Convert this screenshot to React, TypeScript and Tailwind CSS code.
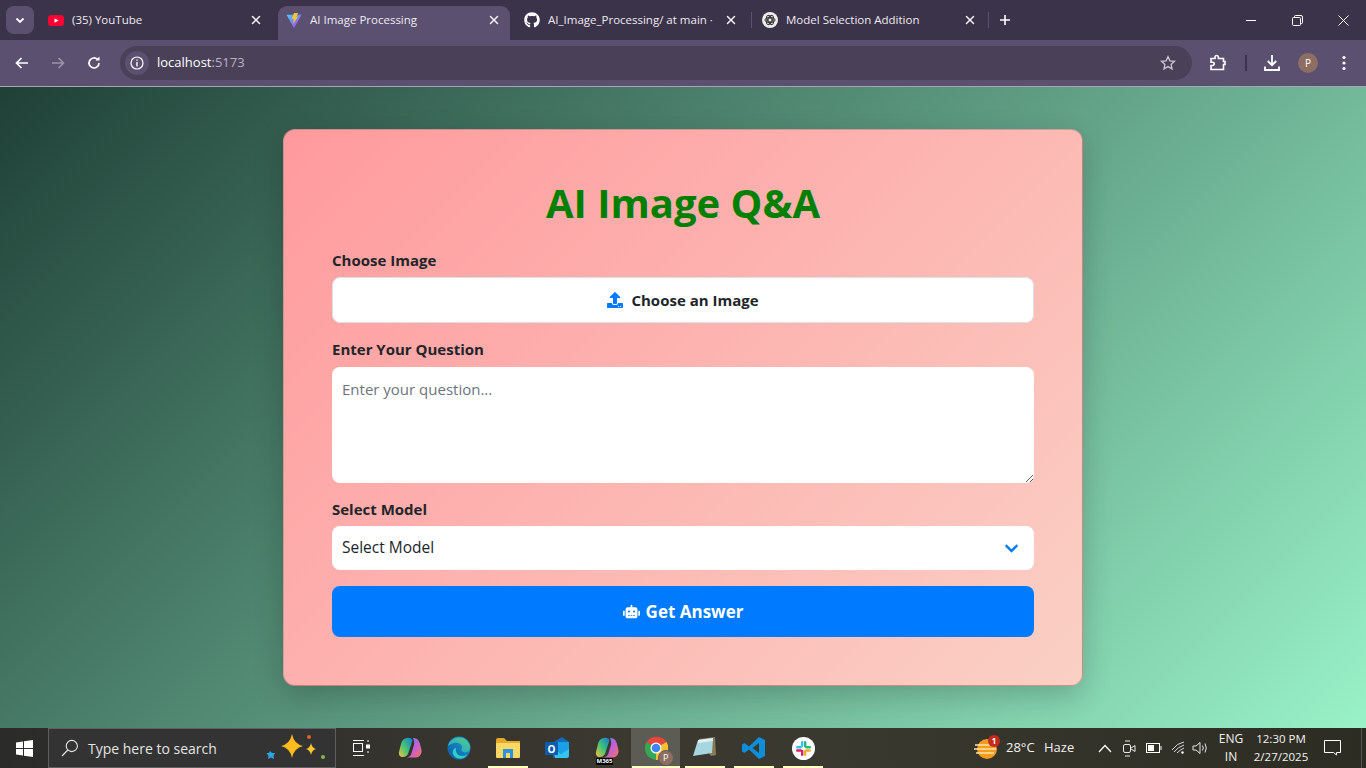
import { FaChevronDown, FaGithub, FaRobot, FaUpload } from 'react-icons/fa';
import { IoClose } from 'react-icons/io5';

const uiFont = "[font-family:'Open_Sans',sans-serif]";

const ViteIcon = () => (
  <svg width="17" height="17" viewBox="0 0 17 17" aria-hidden="true">
    <defs>
      <linearGradient id="viteA" x1="0" y1="0" x2="1" y2="1">
        <stop offset="0" stopColor="#41d1ff" />
        <stop offset="1" stopColor="#bd34fe" />
      </linearGradient>
    </defs>
    <path d="M0.5 2.5 L16.5 2.5 L8.5 16.5 Z" fill="url(#viteA)" />
    <path d="M8.5 0.5 L13 0.5 L10.8 4.5 L12.8 4.5 L7.5 12 L8.4 6.8 L6.2 6.8 Z" fill="#ffc629" />
  </svg>
);

const YoutubeIcon = () => (
  <svg width="16" height="11" viewBox="0 0 16 11" aria-hidden="true">
    <rect width="16" height="11" rx="3" fill="#ff0033" />
    <path d="M6.5 3.2 L10.5 5.5 L6.5 7.8 Z" fill="#fff" />
  </svg>
);

const OpenAiIcon = () => (
  <svg width="16" height="16" viewBox="0 0 16 16" aria-hidden="true">
    <circle cx="8" cy="8" r="8" fill="#eeeeee" />
    <g fill="none" stroke="#3a3a3a" strokeWidth="1">
      <circle cx="8" cy="8" r="2" />
      <ellipse cx="8" cy="8" rx="5" ry="2.6" />
      <ellipse cx="8" cy="8" rx="5" ry="2.6" transform="rotate(60 8 8)" />
      <ellipse cx="8" cy="8" rx="5" ry="2.6" transform="rotate(120 8 8)" />
    </g>
  </svg>
);

const Tab = ({
  icon,
  title,
  box,
  active,
}: {
  icon: React.ReactNode;
  title: string;
  box: string;
  active?: boolean;
}) => (
  <div className={`flex h-[34px] shrink-0 items-center pb-[6px] ${box} ${active ? 'rounded-t-[9px] bg-[#5b5070]' : ''}`}>
    <span className="flex w-[16px] shrink-0 items-center justify-center">{icon}</span>
    <span className="ml-[8px] min-w-0 flex-1 overflow-hidden whitespace-nowrap text-[11.5px] text-[#eeeaf2]">{title}</span>
    <IoClose className="ml-[4px] shrink-0 text-[#f2f0f5]" size={16} />
  </div>
);

const ChromeBar = () => (
  <div className={`${uiFont} shrink-0`}>
    <div className="flex h-[40px] items-end bg-[#3b3349] pl-[6px]">
      <div className="mb-[6px] flex h-[28px] w-[28px] shrink-0 items-center justify-center rounded-[8px] bg-[#5b5070]">
        <svg width="12" height="12" viewBox="0 0 12 12" fill="none" stroke="#fff" strokeWidth="1.8">
          <path d="M2.5 4.5 L6 8 L9.5 4.5" />
        </svg>
      </div>
      <div className="ml-[6px] flex items-end">
        <Tab icon={<YoutubeIcon />} title="(35) YouTube" box="w-[238px] pl-[8px] pr-[14px]" />
        <Tab icon={<ViteIcon />} title="AI Image Processing" box="w-[232px] pl-[8px] pr-[8px]" active />
        <Tab
          icon={<FaGithub size={16} className="text-white" />}
          title="AI_Image_Processing/ at main ·"
          box="w-[241px] pl-[14px] pr-[12px]"
        />
        <div className="mb-[12px] h-[16px] w-px bg-[#5b5070]" />
        <Tab icon={<OpenAiIcon />} title="Model Selection Addition" box="w-[236px] pl-[10px] pr-[10px]" />
        <div className="mb-[12px] h-[16px] w-px bg-[#5b5070]" />
        <svg className="mb-[14px] ml-[10px]" width="12" height="12" viewBox="0 0 12 12" stroke="#fff" strokeWidth="1.6">
          <path d="M6 1 V11 M1 6 H11" />
        </svg>
      </div>
      <div className="ml-auto flex h-[40px] items-center text-white">
        <div className="flex w-[46px] justify-center">
          <div className="h-px w-[10px] bg-white" />
        </div>
        <div className="flex w-[46px] justify-center">
          <svg width="11" height="11" viewBox="0 0 11 11" fill="none" stroke="#fff">
            <rect x="0.5" y="2.5" width="8" height="8" rx="1" />
            <path d="M2.5 2 V1.5 Q2.5 0.5 3.5 0.5 H9 Q10.5 0.5 10.5 2 V7.5 Q10.5 8.5 9.5 8.5 H9" />
          </svg>
        </div>
        <div className="flex w-[46px] justify-center">
          <svg width="11" height="11" viewBox="0 0 11 11" stroke="#fff">
            <path d="M0.5 0.5 L10.5 10.5 M10.5 0.5 L0.5 10.5" />
          </svg>
        </div>
      </div>
    </div>
    <div className="flex h-[47px] items-center border-b border-[#a9a3b3] bg-[#5b5070] pl-[14px] pr-[20px]">
      <svg width="16" height="16" viewBox="0 0 16 16" fill="none" stroke="#fff" strokeWidth="1.7">
        <path d="M14 8 H2.5 M7.5 3 L2.5 8 L7.5 13" />
      </svg>
      <svg className="ml-[20px]" width="16" height="16" viewBox="0 0 16 16" fill="none" stroke="#9b93a8" strokeWidth="1.7">
        <path d="M2 8 H13.5 M8.5 3 L13.5 8 L8.5 13" />
      </svg>
      <svg className="ml-[20px]" width="16" height="16" viewBox="0 0 16 16" fill="none" stroke="#fff" strokeWidth="1.7">
        <path d="M13 8 A5 5 0 1 1 11.5 4.4" />
        <path d="M13.5 1.5 V5.5 H9.5 Z" fill="#fff" stroke="none" />
      </svg>
      <div className="ml-[18px] flex h-[34px] flex-1 items-center rounded-full bg-[#4a4159] pl-[5px] pr-[16px]">
        <div className="flex h-[24px] w-[24px] items-center justify-center rounded-full bg-[#5b5070]">
          <svg width="14" height="14" viewBox="0 0 14 14" fill="none" stroke="#fff" strokeWidth="1.2">
            <circle cx="7" cy="7" r="6" />
            <path d="M7 6 V10.5 M7 3.4 V4.8" strokeWidth="1.4" />
          </svg>
        </div>
        <span className="ml-[8px] text-[13px] text-white">
          localhost<span className="text-[#b9b3c4]">:5173</span>
        </span>
        <svg className="ml-auto" width="16" height="16" viewBox="0 0 16 16" fill="none" stroke="#c9c5d0" strokeWidth="1.3">
          <path d="M8 1.6 L9.9 5.8 L14.5 6.3 L11.1 9.4 L12 13.9 L8 11.6 L4 13.9 L4.9 9.4 L1.5 6.3 L6.1 5.8 Z" />
        </svg>
      </div>
      <svg className="ml-[17px]" width="18" height="18" viewBox="0 0 18 18" fill="none" stroke="#fff" strokeWidth="1.6">
        <path d="M2 4.5 H6 V3.2 A1.7 1.7 0 0 1 9.4 3.2 V4.5 H14.5 V7.5 H16 V10.5 H14.5 V15.5 H2 V11.5 H4 A1.7 1.7 0 0 0 4 8.2 H2 Z" />
      </svg>
      <div className="ml-[18px] h-[16px] w-[2px] bg-[#3b3349]" />
      <svg className="ml-[16px]" width="18" height="18" viewBox="0 0 18 18" fill="none" stroke="#fff" strokeWidth="1.8">
        <path d="M9 1 V11 M4.8 7 L9 11.2 L13.2 7 M2 12.5 V16 H16 V12.5" />
      </svg>
      <div className="ml-[17px] flex h-[20px] w-[20px] items-center justify-center rounded-full bg-[#8d6e63] text-[10px] text-white">
        P
      </div>
      <svg className="ml-[24px]" width="4" height="16" viewBox="0 0 4 16" fill="#fff">
        <circle cx="2" cy="2.5" r="1.6" />
        <circle cx="2" cy="8" r="1.6" />
        <circle cx="2" cy="13.5" r="1.6" />
      </svg>
    </div>
  </div>
);

const QaForm = () => (
  <div className="w-[800px] rounded-[12px] border border-[rgba(120,70,70,0.35)] bg-[linear-gradient(135deg,#ff9a9e_0%,#fad0c4_100%)] px-[48px] pb-[48px] pt-[46px] shadow-[0_10px_30px_rgba(0,0,0,0.2)] [font-family:'Open_Sans',sans-serif]">
    <h1 className="mb-[18px] text-center text-[40px] font-bold leading-[54px] text-[#008000]">AI Image Q&amp;A</h1>
    <label className="mb-[5px] block text-[15px] font-bold leading-[24px] text-[#212529]">Choose Image</label>
    <div className="flex h-[46px] items-center justify-center rounded-[8px] border border-[#dee2e6] bg-white text-[15px] font-bold text-[#212529]">
      <FaUpload className="mr-[8px] text-[#007bff]" size={16} />
      Choose an Image
    </div>
    <label className="mb-[6px] mt-[14px] block text-[15px] font-bold leading-[24px] text-[#212529]">
      Enter Your Question
    </label>
    <textarea
      className="block h-[116px] w-full rounded-[8px] bg-white px-[10px] py-[10px] text-[15px] leading-[24px] text-[#212529] outline-none placeholder:text-[#6c757d]"
      placeholder="Enter your question..."
    />
    <label className="mb-[5px] mt-[14px] block text-[15px] font-bold leading-[24px] text-[#212529]">Select Model</label>
    <div className="relative">
      <select className="block h-[44px] w-full appearance-none rounded-[8px] bg-white px-[10px] text-[15.5px] text-[#212529] outline-none">
        <option>Select Model</option>
      </select>
      <FaChevronDown className="absolute right-[15px] top-[15px] text-[#007bff]" size={15} />
    </div>
    <button className="mt-[16px] flex h-[51px] w-full items-center justify-center rounded-[8px] bg-[#007bff] text-[17px] font-bold text-white">
      <FaRobot className="mr-[6px]" size={17} />
      Get Answer
    </button>
  </div>
);

const Cell = ({ children, active, mark }: { children: React.ReactNode; active?: boolean; mark?: string }) => (
  <div className={`relative flex h-[40px] w-[49.2px] shrink-0 items-center justify-center ${active ? 'bg-[#5c5c55]' : ''}`}>
    {children}
    {mark && <div className={`absolute bottom-0 h-[2px] bg-[#fdfdc4] ${mark}`} />}
  </div>
);

const CopilotMark = ({ idA, idB }: { idA: string; idB: string }) => (
  <svg width="24" height="22" viewBox="0 0 24 22">
    <defs>
      <linearGradient id={idA} x1="0" y1="1" x2="1" y2="0">
        <stop offset="0" stopColor="#f5c23a" />
        <stop offset="0.5" stopColor="#3dc27b" />
        <stop offset="1" stopColor="#1a78d8" />
      </linearGradient>
      <linearGradient id={idB} x1="0" y1="0" x2="1" y2="1">
        <stop offset="0" stopColor="#3ea0ea" />
        <stop offset="0.5" stopColor="#c25ddb" />
        <stop offset="1" stopColor="#f4765a" />
      </linearGradient>
    </defs>
    <path d="M9 1 C11 0.5 13.5 1 14.5 3 L10 17 C9 19 7 20 5 20 C2 20 0.5 18 1 15 L3 7 C4 3 6 1.5 9 1 Z" fill={`url(#${idA})`} />
    <path d="M15 1 C19 1 21 3 22 7 L23.5 13 C24 17 22 20 18 20.5 H9 C12 20 13 18 13.5 16 L16 8 C16.5 5 16 3 15 1 Z" fill={`url(#${idB})`} />
  </svg>
);

const Taskbar = () => (
  <div className={`${uiFont} flex h-[40px] shrink-0 items-center bg-[linear-gradient(90deg,#2b2b2a_0%,#3a382f_45%,#3a392f_60%,#2c2c23_100%)] text-white`}>
    <div className="flex h-[40px] w-[48px] shrink-0 items-center justify-center">
      <svg width="17" height="17" viewBox="0 0 17 17" fill="#fff">
        <path d="M0 2.4 L7 1.4 V8 H0 Z M8 1.2 L17 0 V8 H8 Z M0 9 H7 V15.6 L0 14.6 Z M8 9 H17 V17 L8 15.8 Z" />
      </svg>
    </div>
    <div className="flex h-[40px] w-[288px] shrink-0 items-center border border-[#5f5f5f] bg-[#333333] pl-[12px]">
      <svg width="18" height="18" viewBox="0 0 18 18" fill="none" stroke="#e6e6e6" strokeWidth="1.1">
        <circle cx="10.8" cy="7" r="5.6" />
        <path d="M6.8 11 L1 17" />
      </svg>
      <span className="ml-[9px] text-[14px] text-[#e4e4e4]">Type here to search</span>
      <svg className="ml-auto mr-[8px]" width="62" height="32" viewBox="0 0 62 32">
        <path d="M27 2 Q29 12 38 14 Q29 16 27 26 Q25 16 16 14 Q25 12 27 2 Z" fill="#fdbb1e" />
        <path d="M46 11 Q47 16 51 17 Q47 18 46 23 Q45 18 41 17 Q45 16 46 11 Z" fill="#fdc62c" />
        <path d="M5 19 L7 21 L10 21 L8.5 24 L9 27 L6 25.5 L3 27 L3.5 24 L1.5 21 L4 21 Z" fill="#2aa7e8" />
        <circle cx="44" cy="5" r="2" fill="#e2622a" />
        <circle cx="58" cy="25" r="2" fill="#84b741" />
      </svg>
    </div>
    <Cell>
      <svg width="18" height="16" viewBox="0 0 18 16" fill="none" stroke="#fff">
        <path d="M1 0.5 H12 M1 15.5 H12" />
        <rect x="1.5" y="3.5" width="9" height="8" />
        <path d="M15 1 H17 M15 12 H17" />
        <rect x="14.5" y="5" width="3" height="3" fill="#fff" />
      </svg>
    </Cell>
    <Cell>
      <CopilotMark idA="cop1" idB="cop2" />
    </Cell>
    <Cell>
      <svg width="24" height="24" viewBox="0 0 24 24">
        <defs>
          <linearGradient id="edge1" x1="0" y1="1" x2="1" y2="0">
            <stop offset="0" stopColor="#0c59a4" />
            <stop offset="1" stopColor="#1ba0d8" />
          </linearGradient>
          <linearGradient id="edge2" x1="0" y1="1" x2="1" y2="0">
            <stop offset="0" stopColor="#1b9de2" />
            <stop offset="1" stopColor="#52d17c" />
          </linearGradient>
        </defs>
        <circle cx="12" cy="12" r="11.5" fill="url(#edge1)" />
        <path d="M1 10 C3 2 13 -1 19 4 C24 8 24 15 20 16 C16 17 13 15 15 12 C16 9 11 6 7 7 C4 8 2 9 1 10 Z" fill="url(#edge2)" />
        <path d="M9 12 C8 18 13 22 20 19 C17 24 8 24 6 18 C5 15 7 12 9 12 Z" fill="#2fd0c4" />
      </svg>
    </Cell>
    <Cell mark="w-[40px]">
      <svg width="24" height="20" viewBox="0 0 24 20">
        <path d="M0 2 Q0 0 2 0 H8 L11 3 H24 V6 H0 Z" fill="#e5a82a" />
        <rect y="5" width="24" height="15" rx="1" fill="#fbd866" />
        <rect x="7" y="11" width="10" height="9" fill="#2a93e0" />
        <rect x="10" y="15" width="4" height="5" fill="#fbd866" />
      </svg>
    </Cell>
    <Cell>
      <svg width="24" height="24" viewBox="0 0 24 24">
        <path d="M9 6 L17 1 L24 6 V19 Q24 22 21 22 H10 Q8 22 8 20 Z" fill="#0f6cbd" />
        <path d="M9 6 H24 V14 L16 18 L9 12 Z" fill="#1a9fe8" />
        <path d="M9 12 L16 18 L24 13 V20 Q24 22 21 22 H10 Z" fill="#35c3f0" />
        <rect x="0" y="6" width="13" height="13" rx="1" fill="#0a5cad" />
        <text x="6.5" y="16.5" textAnchor="middle" fontSize="10" fontWeight="700" fill="#fff">O</text>
      </svg>
    </Cell>
    <Cell>
      <div className="relative">
        <CopilotMark idA="m1" idB="m2" />
        <span className="absolute bottom-[-6px] left-[1px] bg-black px-[1px] text-[6px] font-bold leading-[7px] text-white">M365</span>
      </div>
    </Cell>
    <Cell active mark="w-[48px]">
      <div className="relative">
        <svg width="24" height="24" viewBox="0 0 24 24">
          <path d="M12 12 L2.5 6 A12 12 0 0 1 22.5 6 Z" fill="#e8453c" />
          <path d="M12 12 L22.5 6 A12 12 0 0 1 12 24 Z" fill="#fbc02d" />
          <path d="M12 12 L12 24 A12 12 0 0 1 2.5 6 Z" fill="#34a853" />
          <circle cx="12" cy="12" r="5.5" fill="#fff" />
          <circle cx="12" cy="12" r="4.3" fill="#3f86f4" />
        </svg>
        <div className="absolute bottom-[-6px] right-[-6px] flex h-[16px] w-[16px] items-center justify-center rounded-full border border-[#5c5c55] bg-[#8d6e63] text-[9px] text-white">
          P
        </div>
      </div>
    </Cell>
    <Cell mark="w-[40px]">
      <svg width="24" height="24" viewBox="0 0 24 24">
        <path d="M6 3 L22 1 L23 19 L18 20 Z" fill="#8a7a55" />
        <path d="M5 4 L20 2 L19 17 L0 20 Z" fill="#a8d6df" />
        <path d="M5 4 L20 2 L20 5 L5 7 Z" fill="#dfeff2" />
      </svg>
    </Cell>
    <Cell mark="w-[40px]">
      <svg width="24" height="24" viewBox="0 0 24 24">
        <path d="M17 1 L23 4 V20 L17 23 L7 13.5 L2.5 17 L0 15.5 V8.5 L2.5 7 L7 10.5 Z M17 7 L10.5 12 L17 17 Z" fill="#0e8ddb" fillRule="evenodd" />
      </svg>
    </Cell>
    <Cell mark="w-[40px]">
      <div className="flex h-[23px] w-[23px] items-center justify-center rounded-full bg-white">
        <svg width="15" height="15" viewBox="0 0 15 15">
          <rect x="5" y="0" width="2.4" height="6" rx="1.2" fill="#36c5f0" />
          <rect x="0" y="5" width="6" height="2.4" rx="1.2" fill="#36c5f0" />
          <rect x="8" y="0" width="2.4" height="6.5" rx="1.2" fill="#2eb67d" />
          <rect x="9" y="5" width="6" height="2.4" rx="1.2" fill="#2eb67d" />
          <rect x="8" y="9" width="2.4" height="6" rx="1.2" fill="#ecb22e" />
          <rect x="9" y="8.3" width="6" height="2.4" rx="1.2" fill="#ecb22e" />
          <rect x="5" y="9" width="2.4" height="6" rx="1.2" fill="#e01e5a" />
          <rect x="0" y="8.3" width="6" height="2.4" rx="1.2" fill="#e01e5a" />
        </svg>
      </div>
    </Cell>

    <div className="ml-auto flex h-[40px] items-center">
      <div className="relative mr-[8px] h-[24px] w-[24px]">
        <svg width="24" height="24" viewBox="0 0 24 24">
          <circle cx="13" cy="13" r="10" fill="#f39a1f" />
          <path d="M1 9 H20 M0 13 H22 M2 17 H20" stroke="#fde3a8" strokeWidth="1.6" />
        </svg>
        <div className="absolute right-[-2px] top-[-1px] flex h-[12px] w-[12px] items-center justify-center rounded-full bg-[#c42b1c] text-[8px] font-bold leading-none text-white">
          1
        </div>
      </div>
      <span className="w-[38px] text-[13px] text-[#f2f2f2]">28°C</span>
      <span className="w-[54px] text-[13px] text-[#f2f2f2]">Haze</span>
      <svg className="mr-[10px]" width="14" height="9" viewBox="0 0 14 9" fill="none" stroke="#fff" strokeWidth="1.2">
        <path d="M1 8 L7 1.5 L13 8" />
      </svg>
      <svg className="mr-[10px]" width="14" height="17" viewBox="0 0 14 17" fill="none" stroke="#e8e8e8">
        <path d="M3 1 H8 M3 16 H8" />
        <rect x="1.5" y="4.5" width="7" height="8" rx="1.5" />
        <path d="M9 8 L13 5.5 V11.5 L9 9" />
      </svg>
      <svg className="mr-[9px]" width="16" height="10" viewBox="0 0 16 10" fill="none" stroke="#fff">
        <rect x="0.5" y="0.5" width="13" height="9" />
        <rect x="2" y="2" width="6" height="6" fill="#fff" stroke="none" />
        <path d="M15 3 V7" />
      </svg>
      <svg className="mr-[7px]" width="14" height="14" viewBox="0 0 14 14" fill="none" stroke="#d8d8d8">
        <path d="M1 9 Q6 2 13 1 M3 11 Q7 6 13 4 M6 12 Q9 9 13 7" />
        <circle cx="11.5" cy="11.5" r="1.2" fill="#fff" stroke="none" />
      </svg>
      <svg className="mr-[4px]" width="17" height="14" viewBox="0 0 17 14" fill="none" stroke="#e8e8e8">
        <path d="M1 5 H4 L8 1.5 V12.5 L4 9 H1 Z M10.5 4.5 Q12 7 10.5 9.5 M13 2.5 Q15.5 7 13 11.5" />
      </svg>
      <div className="w-[36px] text-center text-[12px] leading-[18px] text-[#f2f2f2]">
        <div>ENG</div>
        <div>IN</div>
      </div>
      <div className="w-[64px] text-center text-[11.5px] leading-[18px] text-[#f2f2f2]">
        <div>12:30 PM</div>
        <div>2/27/2025</div>
      </div>
      <svg className="ml-[11px]" width="17" height="16" viewBox="0 0 17 16" fill="none" stroke="#fff">
        <path d="M0.5 0.5 H16.5 V12.5 H12.5 V15 L9.5 12.5 H0.5 Z" />
      </svg>
      <div className="ml-[20px] h-[40px] w-px bg-[#555]" />
      <div className="w-[4px]" />
    </div>
  </div>
);

export default function App() {
  return (
    <div className="flex h-screen w-screen flex-col overflow-hidden">
      <ChromeBar />
      <main className="flex min-h-0 flex-1 items-start justify-center bg-[linear-gradient(135deg,#1f4037_0%,#99f2c8_100%)] pt-[42px]">
        <QaForm />
      </main>
      <Taskbar />
    </div>
  );
}
